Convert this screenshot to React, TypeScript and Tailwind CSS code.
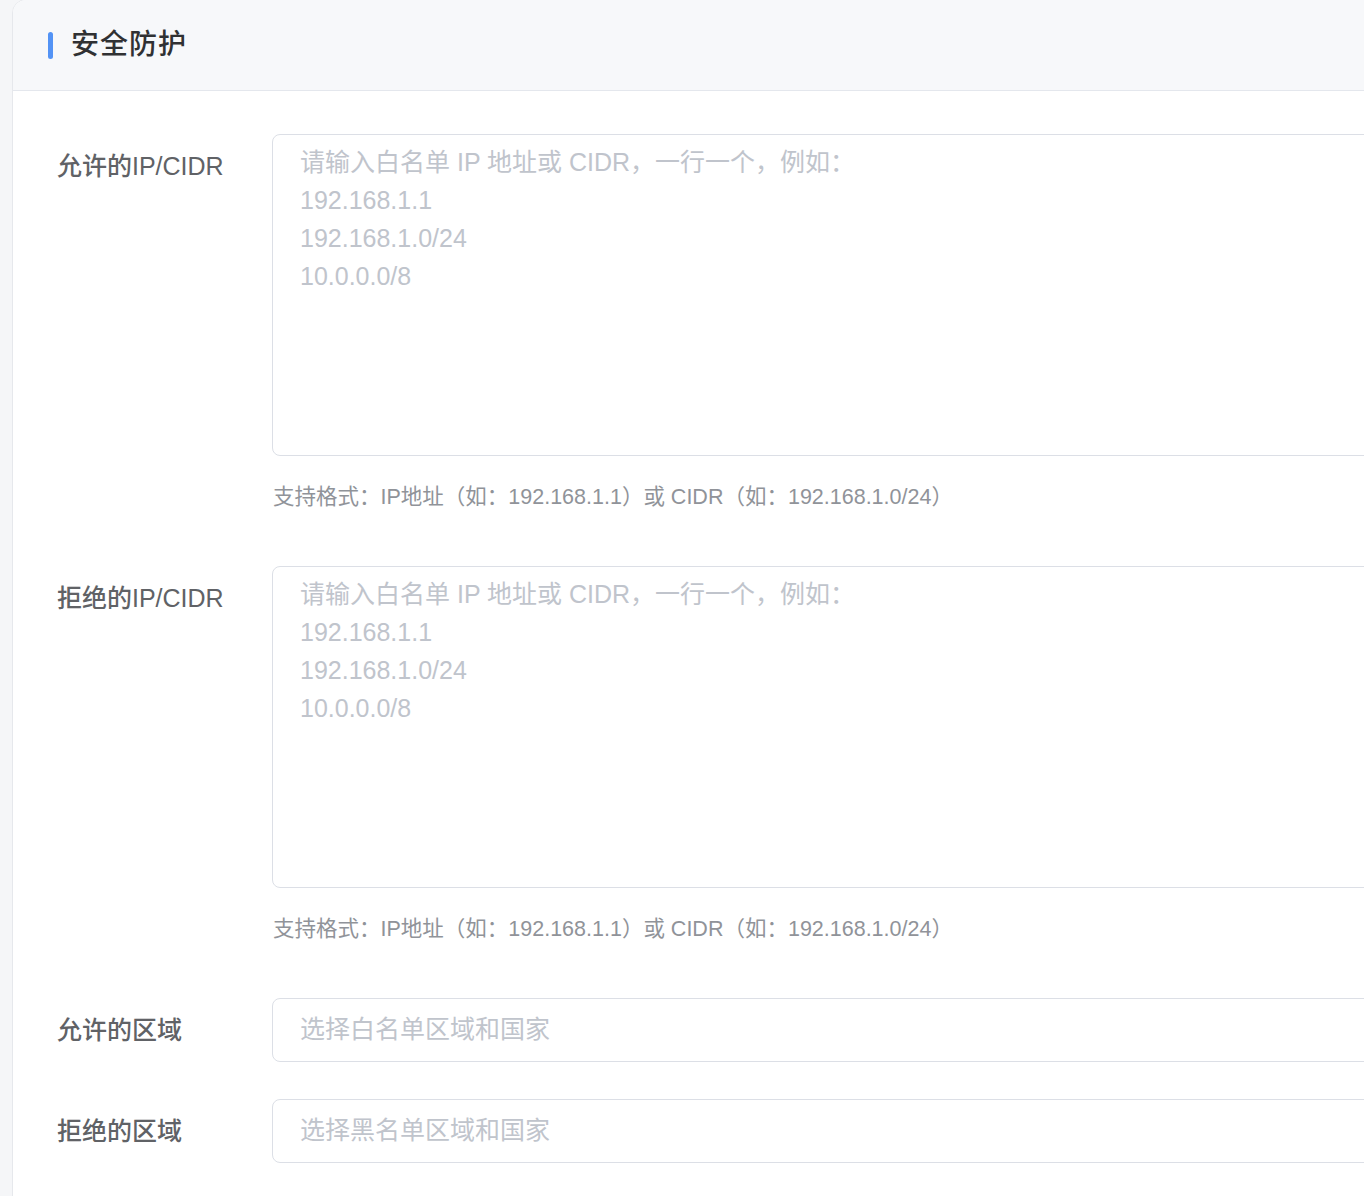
import React from 'react';

const FONT = "font-['Liberation_Sans','Noto_Sans_CJK_SC',sans-serif]";

const PLACEHOLDER = '请输入白名单 IP 地址或 CIDR，一行一个，例如：\n192.168.1.1\n192.168.1.0/24\n10.0.0.0/8';
const HELP = '支持格式：IP地址（如：192.168.1.1）或 CIDR（如：192.168.1.0/24）';

function TextAreaItem({ label }: { label: string }) {
  return (
    <div className="flex mb-[55px]">
      <label className="w-[215px] shrink-0 text-[25px] leading-[64px] font-medium text-[#606266]">{label}</label>
      <div className="flex-1">
        <textarea
          readOnly
          placeholder={PLACEHOLDER}
          className="block w-full h-[322px] resize-none rounded-[8px] border border-[#dcdfe6] bg-white px-[27px] py-[8px] text-[25px] leading-[38px] text-[#606266] placeholder:text-[#c0c4cc] outline-none"
        />
        <div className="mt-[27px] text-[21.5px] leading-[28px] text-[#909399] pl-px">{HELP}</div>
      </div>
    </div>
  );
}

function SelectItem({ label, placeholder }: { label: string; placeholder: string }) {
  return (
    <div className="flex mb-[37px]">
      <label className="w-[215px] shrink-0 text-[25px] leading-[64px] font-medium text-[#606266]">{label}</label>
      <div className="flex-1">
        <div className="h-[64px] rounded-[8px] border border-[#dcdfe6] bg-white px-[27px] flex items-center text-[25px] text-[#c0c4cc]">
          {placeholder}
        </div>
      </div>
    </div>
  );
}

export default function App() {
  return (
    <div className={`w-[1364px] h-[1196px] overflow-hidden bg-[#f5f6f8] ${FONT}`}>
      <div className="ml-[12px] -mt-px w-[1420px] min-h-[1220px] bg-white border border-[#e6e8ec] rounded-tl-[14px] overflow-hidden">
        {/* header */}
        <div className="h-[91px] bg-[#f7f8fa] border-b border-[#e4e7ed] flex items-center pl-[35px]">
          <span className="w-[5px] h-[27px] rounded-full bg-[#5393f5] mr-[18px]" />
          <span className="text-[28px] font-medium text-[#303133] tracking-[1px]">安全防护</span>
        </div>

        {/* form */}
        <div className="pt-[43px] pl-[44px]">
          <TextAreaItem label="允许的IP/CIDR" />
          <TextAreaItem label="拒绝的IP/CIDR" />
          <SelectItem label="允许的区域" placeholder="选择白名单区域和国家" />
          <SelectItem label="拒绝的区域" placeholder="选择黑名单区域和国家" />
        </div>
      </div>
    </div>
  );
}
